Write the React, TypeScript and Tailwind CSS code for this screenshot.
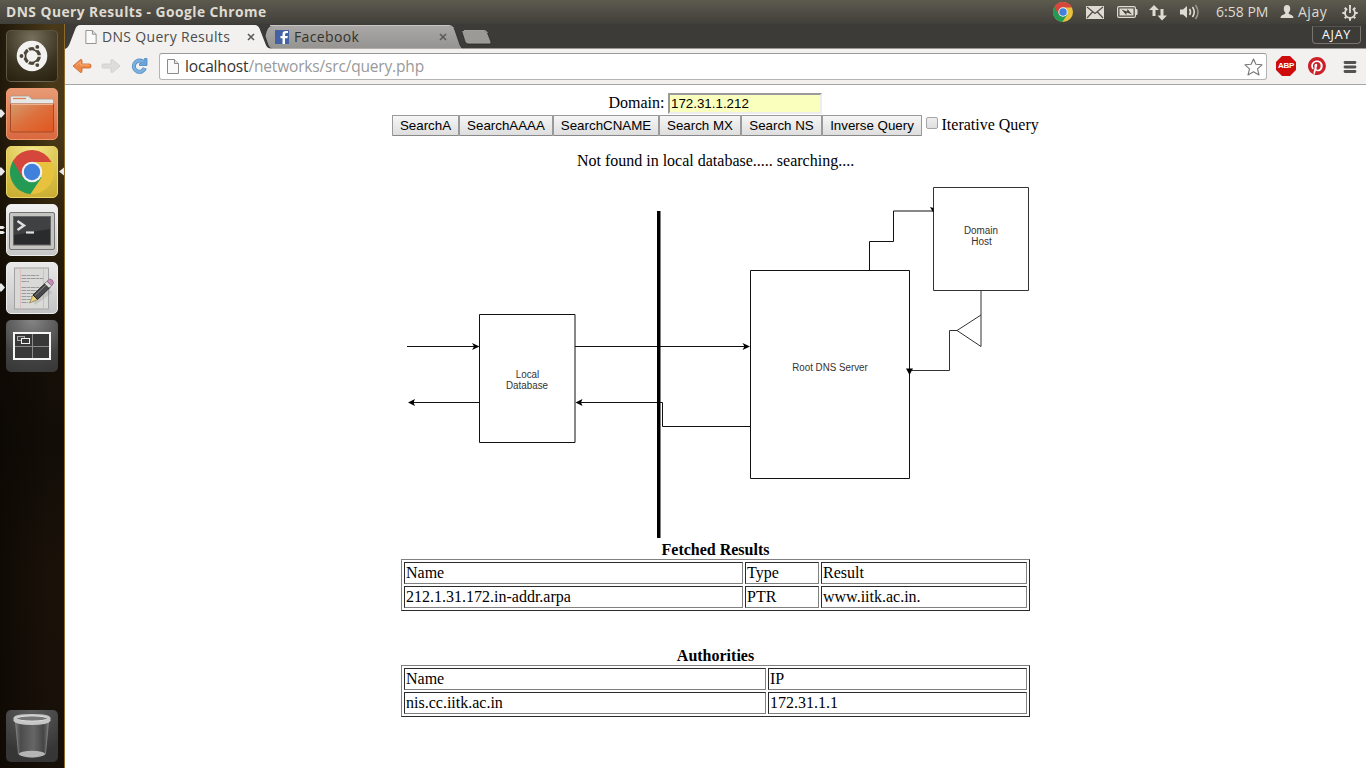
import React from "react";

const ubuntu = "font-['Open_Sans','Noto_Sans',sans-serif]";

function ChromeLogo({ size }: { size: number }) {
  return (
    <svg width={size} height={size} viewBox="0 0 44 44" className="shrink-0">
      <circle cx="22" cy="22" r="22" fill="#e8c23c" />
      <path d="M22 22 L2.9 11 A22 22 0 0 0 20.5 43.95 L31.5 27.5 Z" fill="#249a55" />
      <path d="M2.9 11 A22 22 0 0 1 41.5 12 L22 12 L12.5 27.5 Z" fill="#d5463c" />
      <circle cx="22" cy="22" r="10.3" fill="#f2f2f2" />
      <circle cx="22" cy="22" r="8.2" fill="#4081dc" />
    </svg>
  );
}

function PageIcon({ className }: { className: string }) {
  return (
    <svg width="12" height="15" viewBox="0 0 12 15" className={className}>
      <path d="M.5 .5 H7.5 L11.5 4.5 V14.5 H.5 Z" fill="#fafafa" stroke="#8b8b8b" />
      <path d="M7.5 .5 V4.5 H11.5" fill="#e4e4e4" stroke="#8b8b8b" />
    </svg>
  );
}

function CloseIcon({ className }: { className: string }) {
  return (
    <svg width="8" height="8" viewBox="0 0 8 8" className={className}>
      <path d="M1 1 L7 7 M7 1 L1 7" stroke="#5a5a58" strokeWidth="1.6" />
    </svg>
  );
}

function TopBar() {
  return (
    <header
      className={`flex h-6 shrink-0 items-center bg-linear-to-b from-[#5d5a4e] to-[#413f3a] text-[#dfdbd2] ${ubuntu}`}
    >
      <h1 className="ml-1.5 w-[270px] whitespace-nowrap text-[13.8px] font-bold leading-6 tracking-[0.46px]">
        DNS Query Results - Google Chrome
      </h1>
      <div className="ml-auto flex h-6 items-center">
        <ChromeLogo size={20} />
        <svg width="18" height="13" viewBox="0 0 18 13" className="ml-[13px]">
          <rect width="18" height="13" fill="#dfdbd2" />
          <path d="M1 1 L9 7.5 L17 1 M1 12 L6.5 6 M17 12 L11.5 6" fill="none" stroke="#504e46" strokeWidth="1.2" />
        </svg>
        <svg width="21" height="12" viewBox="0 0 21 12" className="ml-[13px]">
          <rect x=".6" y=".6" width="17.8" height="10.8" rx="1.5" fill="none" stroke="#dfdbd2" strokeWidth="1.2" />
          <rect x="2.5" y="2.5" width="14" height="7" fill="#dfdbd2" />
          <rect x="18.5" y="3" width="2" height="6" rx="1" fill="#dfdbd2" />
          <path d="M4.500 3.500 L10 5.500 L10.500 3 L15 8.500 L9.800 6.600 L9.300 9 Z" fill="#45433d" />
        </svg>
        <svg width="18" height="17" viewBox="0 0 18 17" className="ml-[11px]">
          <path d="M5 1 L10 6 H6.500 V12 H3.500 V6 H0 Z" fill="#dfdbd2" />
          <path d="M13 16.500 L8.500 11.500 H11.500 V5 H14.500 V11.500 H18 Z" fill="#dfdbd2" />
        </svg>
        <svg width="20" height="16" viewBox="0 0 20 16" className="ml-[13px]">
          <path d="M0 5.500 H3 L7 2 V14 L3 10.500 H0 Z" fill="#dfdbd2" />
          <path d="M9.500 5 Q11.500 8 9.500 11" fill="none" stroke="#dfdbd2" strokeWidth="1.600" />
          <path d="M12.500 3 Q16 8 12.500 13" fill="none" stroke="#dfdbd2" strokeWidth="1.600" />
          <path d="M15.500 1 Q20.500 8 15.500 15" fill="none" stroke="#9a978e" strokeWidth="1.500" />
        </svg>
        <span className="ml-[16px] w-[54px] whitespace-nowrap text-[14px] leading-6 tracking-[0.02px]">6:58 PM</span>
        <svg width="14" height="14" viewBox="0 0 14 14" className="ml-[10px]">
          <path d="M7 0 C9.300 0 10.200 1.600 10.200 3.700 C10.200 5.700 9.300 7 8.500 8 C8.500 9.800 13.500 9.400 13.500 13 H.5 C.5 9.400 5.500 9.800 5.500 8 C4.700 7 3.800 5.700 3.800 3.700 C3.800 1.600 4.700 0 7 0 Z" fill="#dfdbd2" />
        </svg>
        <span className="ml-[4px] w-[32px] whitespace-nowrap text-[14px] leading-6 tracking-[0.5px]">Ajay</span>
        <svg width="16" height="17" viewBox="0 0 16 17" className="mr-[8px] ml-[12px]">
          <path d="M8 1 V4 M2.700 3.700 L4.300 5.300 M13.300 3.700 L11.700 5.300 M.3 9 H3 M13 9 H15.700 M2.700 14.300 L4.300 12.700 M13.300 14.300 L11.700 12.700 M8 14 V16.700" stroke="#dfdbd2" strokeWidth="2" />
          <path d="M5.200 4.800 A5 5 0 1 0 10.800 4.800" fill="none" stroke="#dfdbd2" strokeWidth="1.800" />
          <path d="M8 1 V9" stroke="#dfdbd2" strokeWidth="1.800" />
        </svg>
      </div>
    </header>
  );
}

function TabStrip() {
  return (
    <div className={`relative h-[25px] shrink-0 bg-[#3d3b37] ${ubuntu}`}>
      <svg width="1301" height="25" viewBox="65 24 1301 25" className="absolute inset-0">
        <defs>
          <linearGradient id="inactive" x1="0" y1="0" x2="0" y2="1">
            <stop offset="0" stopColor="#a9a8a6" />
            <stop offset="1" stopColor="#949390" />
          </linearGradient>
        </defs>
        <path d="M265 36 Q267 25.500 272 25.500 H449 Q453 25.500 454.500 29 L460 45 Q461 48 464 49 H272 Q269 48 268 45 Z" fill="url(#inactive)" stroke="#252421" strokeWidth=".7" />
        <path d="M270 25.500 H449 Q452 25.500 453.500 28" fill="none" stroke="#c8c7c4" />
        <path d="M461.500 30.500 H484 Q486.500 30.500 487.500 33 L491 42 Q491.500 44 489.500 44 H468.500 Q466 44 465 41.500 Z" fill="#9b9a97" stroke="#252421" strokeWidth=".7" />
        <path d="M464 30.500 H484 Q486.500 30.500 487.500 33" fill="none" stroke="#bbbab6" strokeWidth=".8" />
        <path d="M65 49 Q68 48 69.500 44 L75.500 28.500 Q77 25 80 25 H255 Q258 25 259.500 28.500 L265.500 44 Q267 48.500 271 48.500 H1366 V49 Z" fill="#f2f1f0" />
      </svg>
      <div className="relative flex h-[25px] items-center text-[14px] leading-[25px] text-[#4c4c4c]">
        <PageIcon className="ml-[20px] h-[14px]" />
        <span className="ml-[5px] w-[135px] whitespace-nowrap tracking-[0.32px]">DNS Query Results</span>
        <CloseIcon className="ml-[10px]" />
        <svg width="14" height="14" viewBox="0 0 14 14" className="ml-[20px]">
          <rect width="14" height="14" fill="#4561a6" />
          <path d="M13 3 H11.300 Q10 3 10 4.500 V6 H12.800 L12.400 8.200 H10 V14 H7.500 V8.200 H5.500 V6 H7.500 V4.200 Q7.500 1 10.700 1 H13 Z" fill="#fff" />
        </svg>
        <span className="ml-[5px] w-[135px] whitespace-nowrap tracking-[0.35px] text-[#35322b]">Facebook</span>
        <CloseIcon className="ml-[10px]" />
        <div className="mt-[-4px] mr-[5px] ml-auto flex h-[18px] w-[49px] items-center justify-center rounded-b-[4px] border border-[#76746d] border-t-[#55534d] text-[12.5px] leading-[16px] tracking-[0.75px] text-white">
          AJAY
        </div>
      </div>
    </div>
  );
}

function Toolbar() {
  return (
    <div className={`flex h-9 shrink-0 items-center border-b border-[#a6a6a6] bg-[#f2f1f0] ${ubuntu}`}>
      <svg width="20" height="16" viewBox="0 0 20 16" className="mt-[-1px] ml-[7px]">
        <path d="M1 8 L8.500 1.500 Q10 1 10 3 V6 H17.500 Q19 6 19 7.500 V8.500 Q19 10 17.500 10 H10 V13 Q10 15 8.500 14.500 Z" fill="#ee8848" stroke="#c8652a" strokeWidth=".8" />
        <path d="M4 7.500 L8.300 4 V7 H17" fill="none" stroke="#f8b078" />
      </svg>
      <svg width="20" height="16" viewBox="0 0 20 16" className="mt-[-1px] ml-[9px]">
        <path d="M19 8 L11.500 1.500 Q10 1 10 3 V6 H2.500 Q1 6 1 7.500 V8.500 Q1 10 2.500 10 H10 V13 Q10 15 11.500 14.500 Z" fill="#dedddc" stroke="#cbcac9" strokeWidth=".8" />
      </svg>
      <svg width="18" height="18" viewBox="0 0 18 18" className="mt-[-1px] ml-[10px]">
        <path d="M13.800 11 A5.600 5.600 0 1 1 11.500 4.500" fill="none" stroke="#4f89bf" strokeWidth="4" />
        <path d="M16 1.500 V8.500 H8.500 V6.500 L12 5 L13.500 1.500 Z" fill="#6aa3d8" stroke="#4f89bf" strokeWidth=".8" />
        <path d="M13.600 11.200 A5.600 5.600 0 1 1 12 4.800" fill="none" stroke="#7bb0e0" strokeWidth="2.700" />
      </svg>
      <div className="ml-[10px] flex h-[27px] w-[1108px] items-center rounded-[3px] border border-[#b4b4b4] border-t-[#999] bg-white">
        <PageIcon className="ml-[7px]" />
        <span className="ml-[6px] whitespace-nowrap text-[15.5px] leading-[25px] tracking-[-0.17px] text-[#999]">
          <span className="text-[#333]">localhost</span>/networks/src/query.php
        </span>
        <svg width="19" height="18" viewBox="0 0 19 18" className="mr-[3px] ml-auto">
          <path d="M9.500 1 L11.900 6.300 L18 6.800 L13.500 10.800 L15 17 L9.500 13.700 L4 17 L5.500 10.800 L1 6.800 L7.100 6.300 Z" fill="#fff" stroke="#777" strokeWidth="1.100" strokeLinejoin="round" />
        </svg>
      </div>
      <div className="mt-[-1px] ml-[9px] flex h-[20px] w-[20px] items-center justify-center bg-[#cf0c0c] [clip-path:polygon(30%_0,70%_0,100%_30%,100%_70%,70%_100%,30%_100%,0_70%,0_30%)]">
        <span className="font-['Liberation_Sans',sans-serif] text-[8px] font-bold leading-[10px] tracking-[-0.3px] text-white">ABP</span>
      </div>
      <svg width="18" height="18" viewBox="0 0 24 24" className="mt-[-1px] ml-[12px]">
        <circle cx="12" cy="12" r="11.500" fill="#fff" />
        <path fill="#cb2027" d="M12 0 C5.400 0 0 5.400 0 12 c0 5.100 3.200 9.400 7.600 11.200 -.1-.9-.2-2.400 0-3.400 l1.400-6 s-.4-.7-.4-1.800 c0-1.700 1-2.900 2.200-2.900 1 0 1.500 .8 1.500 1.700 0 1-.7 2.600-1 4 -.3 1.200 .6 2.200 1.800 2.200 2.100 0 3.800-2.200 3.800-5.500 0-2.900-2.100-4.900-5-4.900 -3.400 0-5.400 2.600-5.400 5.200 0 1 .4 2.100 .9 2.700 l.1 .4-.4 1.400c-.1 .2-.2 .3-.4 .2 -1.500-.7-2.400-2.900-2.400-4.600 0-3.800 2.800-7.300 7.900-7.300 4.200 0 7.400 3 7.400 6.900 0 4.100-2.600 7.500-6.200 7.500 -1.200 0-2.400-.6-2.800-1.400 l-.7 2.800 c-.3 1-1 2.300-1.500 3.100 A12 12 0 1 0 12 0 Z" />
      </svg>
      <svg width="14" height="14" viewBox="0 0 14 14" className="ml-[17px]">
        <path d="M2 2.500 H12 M2 7 H12 M2 11.500 H12" stroke="#525252" strokeWidth="2.800" strokeLinecap="round" />
      </svg>
    </div>
  );
}

function Tile({ tone, arrow, children }: { tone: string; arrow?: "one" | "both" | "two"; children: React.ReactNode }) {
  return (
    <div className="relative flex h-[52px] w-[65px] shrink-0 pl-[6px]">
      {arrow && (
        <svg width="65" height="52" viewBox="0 0 65 52" className="absolute inset-0">
          {arrow === "two" ? (
            <path d="M0 22 H3 L5 23.500 L3 25 H0 Z M0 27 H3 L5 28.500 L3 30 H0 Z" fill="#e8e8e8" />
          ) : (
            <path d="M0 21.500 H1.500 L5 25.500 L1.500 29.500 H0 Z" fill="#e8e8e8" />
          )}
          {arrow === "both" && <path d="M64 21.500 L59 25.500 L64 29.500 Z" fill="#e8e8e8" />}
        </svg>
      )}
      <div className={`relative flex h-[52px] w-[52px] items-center justify-center rounded-[5px] ${tone}`}>{children}</div>
    </div>
  );
}

function Launcher() {
  return (
    <nav className="flex w-[65px] shrink-0 flex-col gap-[6px] border-r border-[#8c6a2c] bg-[linear-gradient(90deg,rgba(10,6,2,.65),rgba(10,6,2,0)_80%),linear-gradient(180deg,#49391a_0,#493817_110px,#2b2009_210px,#171008_300px,#120d07_420px,#1a1209_550px,#171008_744px)] pt-[6px] pb-[6px]">
      <Tile tone="bg-[radial-gradient(circle_at_50%_15%,#77705c,#3b3422_60%,#28200f)] border border-[#7a735f]/60">
        <svg width="32" height="32" viewBox="0 0 32 32">
          <circle cx="16" cy="16" r="15.300" fill="#f3f2f0" />
          <circle cx="16" cy="16" r="7.300" fill="none" stroke="#4b4637" strokeWidth="3.300" />
          <path d="M20 16 H27 M14 12.500 L10.500 6.500 M14 19.500 L10.500 25.500" stroke="#f3f2f0" strokeWidth="1.300" />
          <g stroke="#f3f2f0" strokeWidth="1.300" fill="#4b4637">
            <circle cx="5.500" cy="16" r="2.600" />
            <circle cx="21.300" cy="6.900" r="2.600" />
            <circle cx="21.300" cy="25.100" r="2.600" />
          </g>
        </svg>
      </Tile>
      <Tile arrow="one" tone="bg-linear-to-b from-[#e79a74] to-[#d9683f] border border-[#f0976e]">
        <svg width="46" height="40" viewBox="0 0 46 40">
          <defs>
            <linearGradient id="folder" x1="0" y1="0" x2="1" y2="1">
              <stop offset="0" stopColor="#d49a6c" />
              <stop offset=".5" stopColor="#dd6e3b" />
              <stop offset="1" stopColor="#e1561f" />
            </linearGradient>
          </defs>
          <path d="M1.500 11 V3.500 Q1.500 2 3 2 H19.500 L23 5 H43 Q44.500 5 44.500 6.500 V11 Z" fill="#e6e8e6" stroke="#a8978c" strokeWidth=".8" />
          <path d="M4 4.500 H17" stroke="#db8054" strokeWidth="1.300" />
          <path d="M1.500 10 H44.500 V37 Q44.500 38 43.500 38 H2.500 Q1.500 38 1.500 37 Z" fill="url(#folder)" stroke="#a54b24" />
          <path d="M2 10.500 H44" stroke="#f1b18b" />
        </svg>
      </Tile>
      <Tile arrow="both" tone="bg-[radial-gradient(circle_at_50%_0%,#f4e78c,#d3bb41_70%,#c9ab30)] border border-[#ead767]">
        <ChromeLogo size={44} />
      </Tile>
      <Tile arrow="two" tone="bg-linear-to-b from-[#f2f2f2] to-[#c7c7c7] border border-[#ededed]">
        <svg width="46" height="38" viewBox="0 0 46 38" className="mt-[2px]">
          <rect x=".5" y=".5" width="45" height="37" rx="1.500" fill="#c4c4c1" stroke="#747474" />
          <rect x="4.500" y="4.500" width="37" height="28.500" fill="#292b2d" stroke="#686868" />
          <path d="M5 5 H41 V17 L5 23 Z" fill="#56585a" opacity=".5" />
          <path d="M8.500 9 L15 13.500 L8.500 18" fill="none" stroke="#e0e0e0" strokeWidth="2.400" />
          <path d="M17 20.500 H25" stroke="#e0e0e0" strokeWidth="2.200" />
        </svg>
      </Tile>
      <Tile arrow="one" tone="bg-linear-to-b from-[#e9e9e9] to-[#c4c4c4] border border-[#ededed]">
        <svg width="46" height="46" viewBox="0 0 46 46">
          <rect x="5.500" y="3" width="34" height="41" fill="#d9dad8" stroke="#a2a2a2" />
          <path d="M11.500 3.500 V43.500" stroke="#e3b5b0" strokeWidth=".7" />
          <path d="M34.500 3.500 V43.500" stroke="#adc2dc" strokeWidth=".8" />
          <path d="M12.500 10.500 H30 M12.500 13.500 H34 M12.500 16.500 H20 M12.500 22.500 H34 M12.500 25.500 H33 M12.500 28.500 H32 M12.500 31.500 H29 M12.500 34.500 H24 M12.500 37.500 H19" stroke="#9a9a9a" strokeWidth="1" strokeDasharray="5 .6 3 .5" />
          <path d="M25 38 L42 26" stroke="#888" strokeWidth="4" opacity=".25" />
          <path d="M20.500 38 L24 30 L28.500 34.500 Z" fill="#e8d37a" stroke="#766a38" strokeWidth=".6" />
          <path d="M24 30 L36.500 18 L41 22.500 L28.500 34.500 Z" fill="#48484a" stroke="#242424" />
          <path d="M26 30.500 L37.500 19.500" stroke="#858585" />
          <path d="M35.500 18.500 L38 16.200 L42.700 20.700 L40 23 Z" fill="#ddd" stroke="#555" strokeWidth=".6" />
          <path d="M38 16.200 L40.500 14 Q44 14.200 44.500 18 L42.700 20.700 Z" fill="#c68fb5" stroke="#8d6581" strokeWidth=".8" />
        </svg>
      </Tile>
      <Tile tone="bg-[radial-gradient(circle_at_50%_0%,#858585,#434343_65%,#363636)]">
        <svg width="38" height="28" viewBox="0 0 38 28">
          <rect x="1" y="1" width="36" height="26" fill="#383838" stroke="#f5f5f5" strokeWidth="2" />
          <path d="M19.500 2 V26 M2 14.500 H36" stroke="#8b8b8b" />
          <rect x="4.500" y="4.500" width="7" height="4" fill="#444" stroke="#aaa" />
          <rect x="8.500" y="6.500" width="8" height="5" fill="#383838" stroke="#f0f0f0" />
        </svg>
      </Tile>
      <div className="mt-auto">
        <Tile tone="bg-[radial-gradient(circle_at_50%_0%,#5e5e5e,#363636_75%)]">
          <svg width="40" height="46" viewBox="0 0 40 46">
            <defs>
              <linearGradient id="bin" x1="0" y1="0" x2="1" y2="0">
                <stop offset="0" stopColor="#757575" />
                <stop offset=".15" stopColor="#4c4c4c" />
                <stop offset=".55" stopColor="#666" />
                <stop offset=".85" stopColor="#464646" />
                <stop offset="1" stopColor="#757575" />
              </linearGradient>
            </defs>
            <path d="M3.500 9 L6.500 41 Q20 48 33.500 41 L36.500 9 Z" fill="url(#bin)" stroke="#8a8a8a" strokeWidth=".7" />
            <ellipse cx="20" cy="41" rx="13" ry="3.300" fill="#b4b4b4" />
            <path d="M1.500 5 Q2 1 20 1 Q38 1 38.500 5 V8 Q36 12 20 12 Q4 12 1.500 8 Z" fill="#c6c6c6" />
            <ellipse cx="20" cy="5.500" rx="15.500" ry="2.600" fill="#777" stroke="#dcdcdc" />
          </svg>
        </Tile>
      </div>
    </nav>
  );
}

function SearchButton({ label, width }: { label: string; width: string }) {
  return (
    <button
      type="button"
      className={`h-[21px] ${width} whitespace-nowrap rounded-[1px] border border-[#999] border-b-[#888] bg-linear-to-b from-[#f6f6f6] to-[#dedede] text-center font-['Liberation_Sans',sans-serif] text-[13.333px] leading-[19px] text-black`}
    >
      {label}
    </button>
  );
}

function Diagram() {
  return (
    <svg width="640" height="360" viewBox="400 180 640 360" className="ml-[335px] block">
      <g fill="none" stroke="#111" strokeWidth="1">
        <path d="M933.500 187.500 H1028.500 V290.500 H933.500 Z" stroke="#333" />
        <path d="M750.500 270.500 H909.500 V478.500 H750.500 Z" />
        <path d="M479.500 314.500 H575 V442.500 H479.500 Z" />
        <path d="M407 346.500 H474 M575 346.500 H745 M479 402.500 H413" />
        <path d="M750 426.500 H662.500 V402.500 H580" />
        <path d="M869.500 270 V241.500 H893.500 V211 H933" />
        <path d="M981 291 V346.500 L957 330.500 L981 315 M957 330.500 H949.500 V370.500 H912" stroke="#333" />
      </g>
      <rect x="657" y="211" width="3.500" height="327" fill="#000" />
      <g fill="#000">
        <path d="M479.500 346.500 L472 343 L474 346.500 L472 350 Z" />
        <path d="M750 346.500 L742.500 343 L744.500 346.500 L742.500 350 Z" />
        <path d="M408 402.500 L415 399 L413.500 402.500 L415 406 Z" />
        <path d="M575.500 402.500 L582.500 399 L581 402.500 L582.500 406 Z" />
        <path d="M930 207 L933.500 208 V213 Z" />
        <path d="M906 368.500 L913 368.500 L909.500 375 Z" />
      </g>
      <g fontFamily="Liberation Sans" fontSize="10" fill="#333" textAnchor="middle">
        <text x="527.500" y="377.500" textLength="23.500" lengthAdjust="spacingAndGlyphs">Local</text>
        <text x="527" y="388.500" textLength="42" lengthAdjust="spacingAndGlyphs">Database</text>
        <text x="830" y="371" textLength="75.500" lengthAdjust="spacingAndGlyphs">Root DNS Server</text>
        <text x="981" y="234" textLength="34" lengthAdjust="spacingAndGlyphs">Domain</text>
        <text x="981.500" y="245" textLength="20.500" lengthAdjust="spacingAndGlyphs">Host</text>
      </g>
    </svg>
  );
}

function ResultTable({ title, columns, rows }: { title: string; columns: string; rows: string[][] }) {
  return (
    <section className="ml-[336px] w-[629px]">
      <h2 className="h-[19px] text-center font-bold leading-[19px]">{title}</h2>
      <div className={`grid gap-[2px] border border-[#808080] border-r-[#2b2b2b] border-b-[#2b2b2b] p-[2px] ${columns}`}>
        {rows.flat().map((cell) => (
          <div
            key={cell}
            className="h-[22px] border border-[#808080] border-t-[#2b2b2b] border-l-[#2b2b2b] px-px leading-[19px] whitespace-nowrap"
          >
            {cell}
          </div>
        ))}
      </div>
    </section>
  );
}

function QueryPage() {
  return (
    <main className="flex-1 overflow-hidden bg-white pt-[8px] font-['Liberation_Serif',serif] text-[16px] text-black">
      <div className="flex h-[22px] pl-[543.500px] leading-[20px]">
        <label htmlFor="domain" className="w-[59.500px] whitespace-nowrap">Domain:</label>
        <input
          id="domain"
          defaultValue="172.31.1.212"
          className="h-[21px] w-[154px] border-2 border-[#eee] border-t-[#9a9a9a] border-l-[#9a9a9a] bg-[#faffbd] px-px font-['Liberation_Sans',sans-serif] text-[13.333px] outline-none"
        />
      </div>
      <div className="flex h-[21px] pl-[327px]">
        <SearchButton label="SearchA" width="w-[67px]" />
        <SearchButton label="SearchAAAA" width="w-[94px]" />
        <SearchButton label="SearchCNAME" width="w-[106px]" />
        <SearchButton label="Search MX" width="w-[82px]" />
        <SearchButton label="Search NS" width="w-[81px]" />
        <SearchButton label="Inverse Query" width="w-[100px]" />
        <input
          id="iterative"
          type="checkbox"
          className="mt-[2px] ml-[4px] h-[12px] w-[12px] appearance-none rounded-[2px] border border-[#a5a5a5] bg-linear-to-b from-[#eee] to-[#dedede]"
        />
        <label htmlFor="iterative" className="ml-[3.500px] whitespace-nowrap leading-[20px]">Iterative Query</label>
      </div>
      <p className="h-[44px] pt-[15px] text-center leading-[19px]">Not found in local database..... searching....</p>
      <Diagram />
      <ResultTable
        title="Fetched Results"
        columns="grid-cols-[339px_74px_206px]"
        rows={[
          ["Name", "Type", "Result"],
          ["212.1.31.172.in-addr.arpa", "PTR", "www.iitk.ac.in."],
        ]}
      />
      <div className="h-[35px]" />
      <ResultTable
        title="Authorities"
        columns="grid-cols-[362px_259px]"
        rows={[
          ["Name", "IP"],
          ["nis.cc.iitk.ac.in", "172.31.1.1"],
        ]}
      />
    </main>
  );
}

export default function App() {
  return (
    <div className="flex h-[768px] w-[1366px] flex-col overflow-hidden">
      <TopBar />
      <div className="flex min-h-0 flex-1">
        <Launcher />
        <div className="flex min-w-0 flex-1 flex-col">
          <TabStrip />
          <Toolbar />
          <QueryPage />
        </div>
      </div>
    </div>
  );
}
